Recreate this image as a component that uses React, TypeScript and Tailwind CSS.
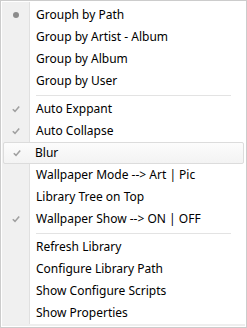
import React from "react";

type Item =
  | { kind: "sep" }
  | { kind: "item"; label: string; mark?: "dot" | "check"; hover?: boolean };

const items: Item[] = [
  { kind: "item", label: "Grouph by Path", mark: "dot" },
  { kind: "item", label: "Group by Artist - Album" },
  { kind: "item", label: "Group by Album" },
  { kind: "item", label: "Group by User" },
  { kind: "sep" },
  { kind: "item", label: "Auto Exppant", mark: "check" },
  { kind: "item", label: "Auto Collapse", mark: "check" },
  { kind: "item", label: "Blur", mark: "check", hover: true },
  { kind: "item", label: "Wallpaper Mode --> Art | Pic" },
  { kind: "item", label: "Library Tree on Top" },
  { kind: "item", label: "Wallpaper Show --> ON | OFF", mark: "check" },
  { kind: "sep" },
  { kind: "item", label: "Refresh Library" },
  { kind: "item", label: "Configure Library Path" },
  { kind: "item", label: "Show Configure Scripts" },
  { kind: "item", label: "Show Properties" },
];

function Mark({ mark }: { mark?: "dot" | "check" }) {
  if (mark === "dot")
    return <span className="block w-[6px] h-[6px] rounded-full bg-[#8c8c8c]" />;
  if (mark === "check")
    return (
      <svg width="8" height="8" viewBox="0 0 8 8">
        <path d="M0.8 4.2 L3 6.4 L7.2 1.4" fill="none" stroke="#a0a0a0" strokeWidth="1.6" />
      </svg>
    );
  return null;
}

export default function App() {
  return (
    <div
      className="w-[247px] h-[328px] border border-[#cccccc] bg-white p-px text-[12px] text-[#000000]"
      style={{ fontFamily: '"Noto Sans", "Open Sans", sans-serif' }}
    >
      <div className="h-full flex flex-col pt-[2px] bg-[linear-gradient(to_right,#f0f0f0_27px,#e0e0e0_27px,#e0e0e0_28px,#ffffff_28px)]">
        {items.map((it, i) =>
          it.kind === "sep" ? (
            <div key={i} className="h-[6px] flex items-center pl-[34px] pr-[14px]">
              <div className="h-px w-full bg-[#e3e3e3]" />
            </div>
          ) : (
            <div
              key={i}
              className={
                "h-[22px] flex items-center " +
                (it.hover
                  ? "mx-px border border-[#dcdcdc] rounded-[2px] bg-[linear-gradient(to_bottom,#fcfcfc,#f3f3f3)]"
                  : "")
              }
            >
              <div className={"flex justify-center items-center " + (it.hover ? "w-[25px]" : "w-[27px]")}>
                <Mark mark={it.mark} />
              </div>
              <span className={"leading-none whitespace-nowrap " + (it.hover ? "pl-[6px]" : "pl-[7px]")}>
                {it.label}
              </span>
            </div>
          )
        )}
        <div className="flex-1" />
        <div className="h-[2px] bg-[#eeeeee]" />
      </div>
    </div>
  );
}
